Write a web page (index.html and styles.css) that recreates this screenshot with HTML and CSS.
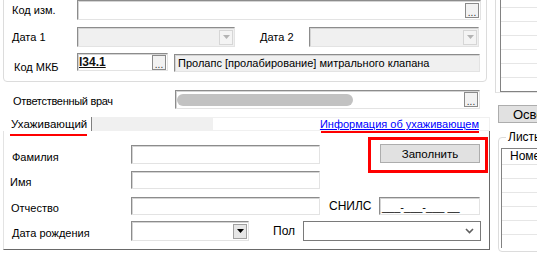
FILE: index.html
```html
<!DOCTYPE html>
<html lang="ru">
<head>
  <meta charset="UTF-8">
  <title>Ухаживающий</title>
  <link rel="stylesheet" href="styles.css">
</head>
<body>
  <div class="window">
    <div class="main">
      <div class="groupbox">
        <div class="row r1">
          <span class="lbl">Код изм.</span>
          <div class="field izm"><span class="ell">...</span></div>
        </div>
        <div class="row r2">
          <span class="lbl">Дата 1</span>
          <div class="field disabled date1">
            <span class="drop drop-off"><svg width="7" height="4" viewBox="0 0 7 4"><path d="M0 0h7L3.5 4z" fill="#b4b4b4"/></svg></span>
          </div>
          <span class="lbl-d2">Дата 2</span>
          <div class="field disabled date2">
            <span class="drop drop-off"><svg width="7" height="4" viewBox="0 0 7 4"><path d="M0 0h7L3.5 4z" fill="#b4b4b4"/></svg></span>
          </div>
        </div>
        <div class="row r3">
          <span class="lbl lbl-mkb">Код МКБ</span>
          <div class="field mkb"><span class="code">I34.1</span><span class="ell">...</span></div>
          <div class="field readonly diag">Пролапс [пролабирование] митрального клапана</div>
        </div>
      </div>

      <div class="row doctor">
        <span class="lbl-doc">Ответственный врач</span>
        <div class="field doc"><span class="blur"></span><span class="ell">...</span></div>
      </div>

      <div class="tabs">
        <div class="tabstrip">
          <div class="tab">Ухаживающий</div>
          <div class="linkarea"><a class="link">Информация об ухаживающем</a></div>
        </div>
        <div class="tabpage">
          <div class="row p1">
            <span class="plbl">Фамилия</span>
            <div class="field pf"></div>
            <button class="fill">Заполнить</button>
          </div>
          <div class="row p2">
            <span class="plbl name">Имя</span>
            <div class="field pf"></div>
          </div>
          <div class="row p3">
            <span class="plbl patr">Отчество</span>
            <div class="field pf"></div>
            <span class="lbl-snils">СНИЛС</span>
            <div class="field snils">___-___-___ __</div>
          </div>
          <div class="row p4">
            <span class="plbl">Дата рождения</span>
            <div class="field birth">
              <span class="drop drop-on"><svg width="7" height="4" viewBox="0 0 7 4"><path d="M0 0h7L3.5 4z" fill="#000"/></svg></span>
            </div>
            <span class="lbl-sex">Пол</span>
            <div class="sex">
              <svg class="chev" width="9" height="6" viewBox="0 0 9 6"><path d="M1 1l3.5 3.5L8 1" fill="none" stroke="#606060" stroke-width="1.6"/></svg>
            </div>
          </div>
        </div>
      </div>
    </div>

    <div class="side">
      <div class="toplist"><div class="grid"></div></div>
      <button class="btn-osv">Освободить</button>
      <div class="sheets">
        <span class="legend">Листы</span>
        <div class="listview">
          <div class="lv-head">Номер</div>
          <div class="lv-rows"></div>
        </div>
      </div>
    </div>

    <div class="mark mark-box"></div>
    <div class="mark mark-tab"></div>
    <div class="mark mark-link"></div>
  </div>
</body>
</html>
```

FILE: styles.css
```css
body, html {
  margin: 0;
  background-color: #fff;
}
.window {
  position: relative;
  display: flex;
  width: 537px;
  height: 258px;
  overflow: hidden;
  font-family: "Liberation Sans", Arial, sans-serif;
  font-size: 11px;
  color: #000;
}
.main {
  width: 491px;
  flex: none;
}
.row {
  display: flex;
  align-items: center;
}

/* common controls */
.field {
  box-sizing: border-box;
  display: flex;
  align-items: center;
  background-color: #fff;
  border: 1px solid;
  border-color: #8c8c8c #e3e3e3 #e3e3e3 #8c8c8c;
  box-shadow: inset 1px 1px 0 #d4d4d4;
}
.field.disabled,
.field.readonly {
  background-color: #f0f0f0;
}
.ell {
  box-sizing: border-box;
  width: 14px;
  height: 15px;
  margin-left: auto;
  margin-right: 1px;
  border: 1px solid #8a8a8a;
  background-color: #f2f2f2;
  font-size: 10px;
  line-height: 17px;
  text-align: center;
  color: #333;
  overflow: hidden;
}
.drop {
  box-sizing: border-box;
  display: flex;
  align-items: center;
  justify-content: center;
  width: 14px;
  height: 15px;
  margin-left: auto;
  margin-right: 1px;
}
.drop-off {
  border: 1px solid #d6d6d6;
  background-color: #f4f4f4;
}
.drop-on {
  border: 1px solid #a0a0a0;
  background-color: #e6e6e6;
}

/* top group */
.groupbox {
  box-sizing: border-box;
  width: 484px;
  margin: -6px 0 0 3px;
  padding: 5px 0 8px 0;
  border: 1px solid #dcdcdc;
  border-radius: 4px;
}
.lbl {
  box-sizing: border-box;
  width: 73px;
  padding-left: 8px;
  flex: none;
}
.r1, .r2, .r3 {
  height: 20px;
}
.r2 {
  margin-top: 7px;
}
.r3 {
  margin-top: 6px;
  align-items: flex-start;
}
.izm {
  width: 404px;
  height: 20px;
}
.date1 {
  width: 158px;
  height: 20px;
}
.lbl-d2 {
  box-sizing: border-box;
  width: 74px;
  padding-left: 25px;
}
.date2 {
  width: 170px;
  height: 20px;
}
.lbl-mkb {
  padding-left: 10px;
  margin-top: 8px;
}
.mkb {
  width: 91px;
  height: 18px;
}
.code {
  padding-left: 1px;
  font-size: 12px;
  font-weight: bold;
  text-decoration: underline;
  color: #111;
}
.diag {
  width: 306px;
  height: 18px;
  margin: 1px 0 0 6px;
  padding-left: 3px;
  white-space: nowrap;
}

/* responsible doctor */
.doctor {
  height: 19px;
  margin-top: 8px;
}
.lbl-doc {
  box-sizing: border-box;
  width: 175px;
  padding-left: 13px;
  padding-top: 3px;
  font-size: 11px;
  letter-spacing: -0.3px;
}
.doc {
  width: 305px;
  height: 19px;
}
.blur {
  width: 176px;
  height: 12px;
  margin-left: 1px;
  border-radius: 6px;
  background-color: #c2c2c2;
}

/* tabs */
.tabs {
  width: 487px;
  margin: 8px 0 0 3px;
}
.tabstrip {
  display: flex;
  height: 14px;
  background-color: #f0f0f0;
}
.tab {
  width: 80px;
  padding-left: 8px;
  background-color: #fff;
  border-right: 1px solid #808080;
  font-size: 11.5px;
  line-height: 15px;
}
.linkarea {
  box-sizing: border-box;
  width: 276px;
  height: 12px;
  margin: 1px 1px 0 auto;
  padding-right: 10px;
  background-color: #fff;
  text-align: right;
}
.link {
  font-size: 11px;
  line-height: 12px;
  color: #0000ff;
  text-decoration: underline;
}
.tabpage {
  box-sizing: border-box;
  height: 119px;
  padding-top: 14px;
  background-color: #fff;
  border-left: 1px solid #e3e3e3;
  border-right: 1px solid #696969;
  border-bottom: 1px solid #696969;
}
.plbl {
  box-sizing: border-box;
  width: 127px;
  padding-left: 8px;
  flex: none;
}
.plbl.name {
  padding-left: 6px;
}
.plbl.patr {
  padding-left: 7px;
}
.pf {
  width: 189px;
  height: 100%;
}
.p1 {
  height: 19px;
}
.p2 {
  height: 18px;
  margin-top: 7px;
}
.p3 {
  height: 18px;
  margin-top: 8px;
}
.p4 {
  height: 20px;
  margin-top: 6px;
}
.p1 .plbl, .p2 .plbl, .p3 .plbl, .p4 .plbl {
  padding-top: 4px;
}
.fill {
  box-sizing: border-box;
  width: 100px;
  height: 19px;
  margin: -2px 0 0 60px;
  padding: 0;
  border: 1px solid #adadad;
  background-color: #e1e1e1;
  font-family: "Liberation Sans", Arial, sans-serif;
  font-size: 11.5px;
  color: #000;
}
.lbl-snils {
  box-sizing: border-box;
  width: 59px;
  padding-left: 9px;
  font-size: 12px;
}
.snils {
  width: 101px;
  height: 18px;
  padding: 2px 0 0 2px;
  white-space: nowrap;
}
.birth {
  width: 118px;
  height: 20px;
}
.lbl-sex {
  box-sizing: border-box;
  width: 54px;
  padding-left: 24px;
  font-size: 12px;
}
.sex {
  box-sizing: border-box;
  display: flex;
  align-items: center;
  width: 178px;
  height: 20px;
  border: 1px solid #7a7a7a;
  background-color: #fff;
}
.chev {
  margin: 0 6px 0 auto;
}

/* right side */
.side {
  flex: 1;
  padding-left: 4px;
  overflow: hidden;
}
.toplist {
  height: 93px;
  padding-left: 4px;
  border-left: 1px solid #dcdcdc;
  border-bottom: 1px solid #e3e3e3;
  box-sizing: border-box;
}
.grid {
  height: 92px;
  border-left: 1px solid #828282;
  border-bottom: 1px solid #828282;
  box-sizing: border-box;
  background: repeating-linear-gradient(to bottom, transparent 0, transparent 13px, #e6e6e6 13px, #e6e6e6 14px);
  background-position: 0 -6px;
}
.btn-osv {
  display: block;
  box-sizing: border-box;
  width: 60px;
  height: 18px;
  margin: 12px 0 0 3px;
  padding: 0 0 0 14px;
  border: 1px solid #adadad;
  background-color: #e1e1e1;
  font-family: "Liberation Sans", Arial, sans-serif;
  font-size: 13px;
  text-align: left;
  white-space: nowrap;
  overflow: hidden;
}
.sheets {
  box-sizing: border-box;
  width: 60px;
  height: 115px;
  margin: 14px 0 0 3px;
  padding-left: 2px;
  border: 1px solid #dcdcdc;
  border-radius: 4px;
}
.legend {
  display: block;
  width: fit-content;
  margin: -7px 0 0 5px;
  padding: 0 2px;
  background-color: #fff;
  font-size: 12px;
  line-height: 13px;
  white-space: nowrap;
}
.listview {
  box-sizing: border-box;
  height: 100px;
  margin-top: 4px;
  border-left: 1px solid #828282;
  border-top: 1px solid #828282;
}
.lv-head {
  height: 15px;
  padding-left: 8px;
  border-bottom: 1px solid #e3e3e3;
  font-size: 12px;
  line-height: 15px;
  white-space: nowrap;
}
.lv-rows {
  height: 82px;
  background: repeating-linear-gradient(to bottom, transparent 0, transparent 13px, #e6e6e6 13px, #e6e6e6 14px);
}

/* red annotation marks drawn over the form */
.mark {
  position: absolute;
  box-sizing: border-box;
}
.mark-box {
  left: 368px;
  top: 137px;
  width: 120px;
  height: 36px;
  border: 3px solid #ff0000;
}
.mark-tab {
  left: 10px;
  top: 134px;
  width: 77px;
  height: 2px;
  background-color: #ff0000;
}
.mark-link {
  left: 321px;
  top: 131px;
  width: 158px;
  height: 2px;
  background-color: #ff0000;
}
```
